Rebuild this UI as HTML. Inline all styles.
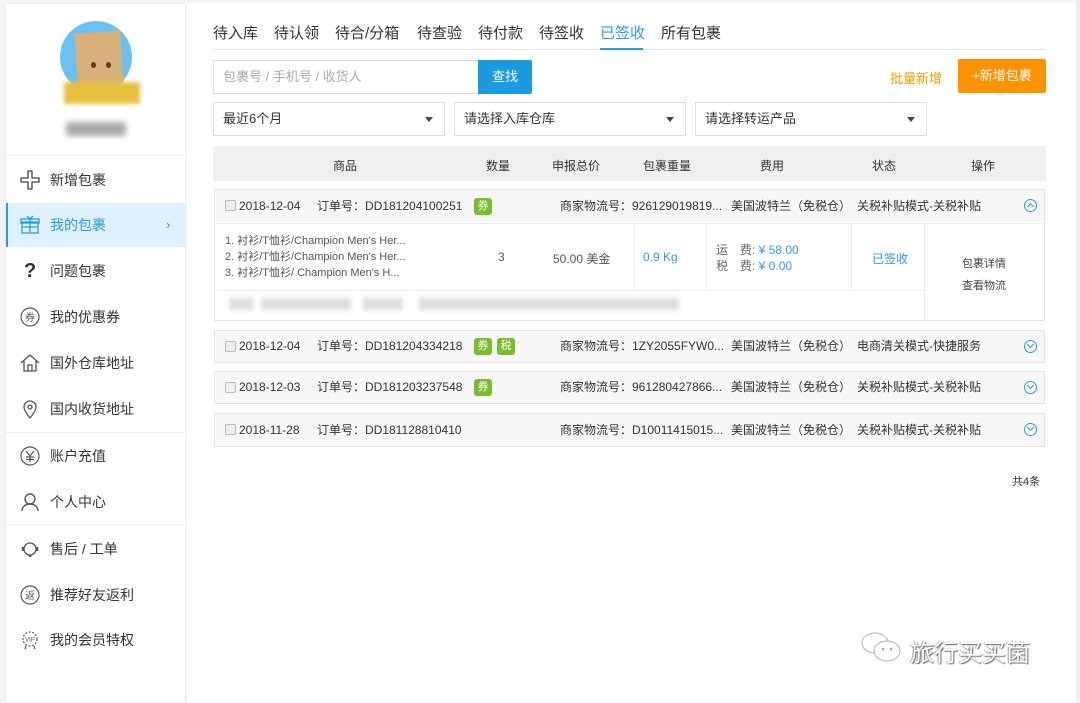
<!DOCTYPE html>
<html><head><meta charset="utf-8"><style>
*{margin:0;padding:0;box-sizing:border-box}
body{width:1080px;height:698px;background:#f4f4f4;font-family:"Liberation Sans","Noto Sans CJK SC",sans-serif;color:#333;position:relative;overflow:hidden;font-size:12px}
.a{position:absolute;white-space:nowrap}
.side{position:absolute;left:5px;top:3px;width:181px;height:700px;background:#fff;border:1px solid #eee}
.main{position:absolute;left:187px;top:3px;width:889px;height:700px;background:#fff}
.mi{position:absolute;left:0;width:179px;height:44px;font-size:14px;color:#333;line-height:44px;padding-left:44px}
.mi svg{position:absolute;left:14px;top:12px}
.div{position:absolute;left:0;width:179px;height:1px;background:#eee}
.tab{position:absolute;top:22px;font-size:15px;color:#333}
.sel{position:absolute;top:102px;height:34px;border:1px solid #ddd;font-size:13px;line-height:32px;padding-left:9px;width:232px}
.sel:after{content:"";position:absolute;right:11px;top:14px;border:4px solid transparent;border-top:5px solid #444}
.card{position:absolute;left:214px;width:831px;border:1px solid #e3e3e3}
.ch{height:32px;background:#f7f7f7;position:relative;font-size:12px;line-height:32px}
.cb{position:absolute;left:10px;top:10px;width:11px;height:11px;border:1px solid #bbb;background:#eee;border-radius:2px}
.tag{position:absolute;top:8px;width:18px;height:17px;background:#7cbb2f;color:#fff;border-radius:3px;font-size:11px;line-height:17px;text-align:center}
.up{position:absolute;left:809px;top:9px;width:13px;height:13px;border:1.3px solid #2a9be0;border-radius:50%}
.up:after{content:"";position:absolute;left:3px;top:4px;width:4px;height:4px;border-left:1.3px solid #2a9be0;border-top:1.3px solid #2a9be0;transform:rotate(45deg)}
.dn:after{top:1px;transform:rotate(225deg)}
.blue{color:#2a9be0}
.blur{position:absolute;height:12px;background:#ddd;filter:blur(2px)}
</style></head><body>
<div class="side">
  <div class="a" style="left:54px;top:17px;width:72px;height:72px;border-radius:50%;background:#6ac0f0"></div>
  <div class="a" style="left:70px;top:28px;width:46px;height:52px;background:#d8b07a;transform:rotate(-4deg)"></div>
  <div class="a" style="left:85px;top:58px;width:5px;height:6px;border-radius:50%;background:#5a3a20"></div>
  <div class="a" style="left:100px;top:58px;width:5px;height:6px;border-radius:50%;background:#5a3a20"></div>
  <div class="a" style="left:58px;top:78px;width:76px;height:22px;background:#e8c040;filter:blur(2px)"></div>
  <div class="a" style="left:60px;top:118px;width:60px;height:14px;background:#aaa;filter:blur(3px)"></div>
  <div class="div" style="top:151px"></div>
  <div class="mi" style="top:154px"><svg width="20" height="20" viewBox="0 0 20 20"><path d="M8 1h4v7h7v4h-7v7H8v-7H1V8h7z" fill="none" stroke="#444" stroke-width="1.3"/></svg>新增包裹</div>
  <div class="mi" style="top:199px;background:#dff1fc;color:#2a9be0;border-left:2px solid #2a9be0;padding-left:42px"><svg width="20" height="20" viewBox="0 0 20 20" style="left:12px"><rect x="2" y="7" width="16" height="11" fill="none" stroke="#2a9be0" stroke-width="1.3"/><rect x="1" y="4" width="18" height="4" fill="none" stroke="#2a9be0" stroke-width="1.3"/><path d="M10 4v14M2 12h16M7 1l3 3 3-3" fill="none" stroke="#2a9be0" stroke-width="1.3"/></svg>我的包裹<span style="position:absolute;left:158px;font-size:13px">›</span></div>
  <div class="mi" style="top:245px"><span style="position:absolute;left:18px;font-size:20px;font-weight:bold;color:#333">?</span>问题包裹</div>
  <div class="mi" style="top:291px"><svg width="20" height="20" viewBox="0 0 20 20"><circle cx="10" cy="10" r="9" fill="none" stroke="#555" stroke-width="1.2"/><text x="10" y="14" font-size="10" text-anchor="middle" fill="#555" font-family="Noto Sans CJK SC">券</text></svg>我的优惠券</div>
  <div class="mi" style="top:337px"><svg width="20" height="20" viewBox="0 0 20 20"><path d="M1 10L10 2l9 8M4 8v10h12V8M8 18v-6h4v6" fill="none" stroke="#555" stroke-width="1.3"/></svg>国外仓库地址</div>
  <div class="mi" style="top:383px"><svg width="20" height="20" viewBox="0 0 20 20"><path d="M10 19s-6-7-6-11a6 6 0 0112 0c0 4-6 11-6 11z" fill="none" stroke="#555" stroke-width="1.3"/><circle cx="10" cy="8" r="2" fill="none" stroke="#555" stroke-width="1.3"/></svg>国内收货地址</div>
  <div class="div" style="top:428px"></div>
  <div class="mi" style="top:430px"><svg width="20" height="20" viewBox="0 0 20 20"><circle cx="10" cy="10" r="9" fill="none" stroke="#555" stroke-width="1.2"/><path d="M6 5l4 5 4-5M10 10v6M6 11h8M6 13.5h8" fill="none" stroke="#555" stroke-width="1.2"/></svg>账户充值</div>
  <div class="mi" style="top:476px"><svg width="20" height="20" viewBox="0 0 20 20"><circle cx="10" cy="7" r="5" fill="none" stroke="#555" stroke-width="1.4"/><path d="M2 19c0-4 3-7 8-7s8 3 8 7" fill="none" stroke="#555" stroke-width="1.4"/></svg>个人中心</div>
  <div class="div" style="top:520px"></div>
  <div class="mi" style="top:523px"><svg width="20" height="20" viewBox="0 0 20 20"><circle cx="10" cy="10" r="6" fill="none" stroke="#555" stroke-width="1.3"/><path d="M3 8v4M17 8v4M10 16v2" stroke="#555" stroke-width="2.5"/></svg>售后 / 工单</div>
  <div class="mi" style="top:569px"><svg width="20" height="20" viewBox="0 0 20 20"><circle cx="10" cy="10" r="9" fill="none" stroke="#555" stroke-width="1.2"/><text x="10" y="14" font-size="10" text-anchor="middle" fill="#555" font-family="Noto Sans CJK SC">返</text></svg>推荐好友返利</div>
  <div class="mi" style="top:614px"><svg width="20" height="20" viewBox="0 0 20 20"><circle cx="10" cy="9" r="7" fill="none" stroke="#555" stroke-width="1.2" stroke-dasharray="2 1.5"/><text x="10" y="11.5" font-size="6" text-anchor="middle" fill="#555">VIP</text><path d="M6 16l-1 3M14 16l1 3" stroke="#555" stroke-width="1.2"/></svg>我的会员特权</div>
</div>
<div class="main"></div>
<div class="a" style="left:1076px;top:0;width:4px;height:698px;background:#eee"></div>

<div class="tab" style="left:213px">待入库</div>
<div class="tab" style="left:274px">待认领</div>
<div class="tab" style="left:335px">待合/分箱</div>
<div class="tab" style="left:417px">待查验</div>
<div class="tab" style="left:478px">待付款</div>
<div class="tab" style="left:539px">待签收</div>
<div class="tab" style="left:600px;color:#2a9be0">已签收</div>
<div class="tab" style="left:661px">所有包裹</div>
<div class="a" style="left:213px;top:49px;width:833px;height:1px;background:#e5e5e5"></div>
<div class="a" style="left:600px;top:48px;width:43px;height:2px;background:#2a9be0"></div>

<div class="a" style="left:213px;top:60px;width:266px;height:34px;border:1px solid #ddd;color:#aaa;font-size:13px;line-height:32px;padding-left:9px">包裹号 / 手机号 / 收货人</div>
<div class="a" style="left:478px;top:60px;width:54px;height:34px;background:#1a9be0;color:#fff;font-size:13px;line-height:34px;text-align:center;border-radius:0 2px 2px 0">查找</div>
<div class="a" style="left:890px;top:68px;color:#f39800;font-size:13px">批量新增</div>
<div class="a" style="left:958px;top:59px;width:88px;height:34px;background:#ff9200;color:#fff;font-size:13px;line-height:34px;text-align:center;border-radius:2px">+新增包裹</div>

<div class="sel" style="left:213px">最近6个月</div>
<div class="sel" style="left:454px">请选择入库仓库</div>
<div class="sel" style="left:695px">请选择转运产品</div>

<div class="a" style="left:213px;top:146px;width:833px;height:35px;background:#efefef"></div>
<div class="a" style="left:333px;top:157px">商品</div>
<div class="a" style="left:486px;top:157px">数量</div>
<div class="a" style="left:552px;top:157px">申报总价</div>
<div class="a" style="left:643px;top:157px">包裹重量</div>
<div class="a" style="left:760px;top:157px">费用</div>
<div class="a" style="left:872px;top:157px">状态</div>
<div class="a" style="left:971px;top:157px">操作</div>

<div class="card" style="top:189px;height:132px">
  <div class="ch"><div class="cb"></div><span class="a" style="left:24px">2018-12-04</span><span class="a" style="left:102px">订单号：DD181204100251</span><div class="tag" style="left:259px">券</div><span class="a" style="left:345px">商家物流号：926129019819...</span><span class="a" style="left:516px">美国波特兰（免税仓）</span><span class="a" style="left:642px">关税补贴模式-关税补贴</span><div class="up"></div></div>
  <div style="position:absolute;top:33px;left:0;width:829px;height:1px;background:#eee"></div>
  <div class="a" style="left:10px;top:43px;line-height:16px;font-size:11px;color:#555">1. 衬衫/T恤衫/Champion Men's Her...<br>2. 衬衫/T恤衫/Champion Men's Her...<br>3. 衬衫/T恤衫/ Champion Men's H...</div>
  <div class="a" style="left:283px;top:60px;color:#555">3</div>
  <div class="a" style="left:338px;top:60px;color:#555">50.00 美金</div>
  <div class="a" style="left:419px;top:34px;width:1px;height:67px;background:#eee"></div>
  <div class="a blue" style="left:428px;top:60px">0.9 Kg</div>
  <div class="a" style="left:491px;top:34px;width:1px;height:67px;background:#eee"></div>
  <div class="a" style="left:501px;top:52px;line-height:16px;color:#666">运　费: <span class="blue">¥ 58.00</span><br>税　费: <span class="blue">¥ 0.00</span></div>
  <div class="a" style="left:636px;top:34px;width:1px;height:67px;background:#eee"></div>
  <div class="a blue" style="left:657px;top:60px">已签收</div>
  <div class="a" style="left:709px;top:34px;width:1px;height:97px;background:#eee"></div>
  <div class="a" style="left:747px;top:63px;line-height:22px;color:#444;font-size:11px">包裹详情<br>查看物流</div>
  <div class="a" style="left:0;top:100px;width:709px;height:1px;background:#eee"></div>
  <div class="blur" style="left:14px;top:108px;width:24px"></div>
  <div class="blur" style="left:46px;top:108px;width:90px"></div>
  <div class="blur" style="left:148px;top:108px;width:40px"></div>
  <div class="blur" style="left:204px;top:108px;width:260px"></div>
</div>

<div class="card" style="top:330px;height:33px">
  <div class="ch" style="height:31px;line-height:31px"><div class="cb"></div><span class="a" style="left:24px">2018-12-04</span><span class="a" style="left:102px">订单号：DD181204334218</span><div class="tag" style="left:259px;top:7px">券</div><div class="tag" style="left:282px;top:7px">税</div><span class="a" style="left:345px">商家物流号：1ZY2055FYW0...</span><span class="a" style="left:516px">美国波特兰（免税仓）</span><span class="a" style="left:642px">电商清关模式-快捷服务</span><div class="up dn"></div></div>
</div>
<div class="card" style="top:371px;height:33px">
  <div class="ch" style="height:31px;line-height:31px"><div class="cb"></div><span class="a" style="left:24px">2018-12-03</span><span class="a" style="left:102px">订单号：DD181203237548</span><div class="tag" style="left:259px;top:7px">券</div><span class="a" style="left:345px">商家物流号：961280427866...</span><span class="a" style="left:516px">美国波特兰（免税仓）</span><span class="a" style="left:642px">关税补贴模式-关税补贴</span><div class="up dn"></div></div>
</div>
<div class="card" style="top:413px;height:34px">
  <div class="ch" style="line-height:32px"><div class="cb"></div><span class="a" style="left:24px">2018-11-28</span><span class="a" style="left:102px">订单号：DD181128810410</span><span class="a" style="left:345px">商家物流号：D10011415015...</span><span class="a" style="left:516px">美国波特兰（免税仓）</span><span class="a" style="left:642px">关税补贴模式-关税补贴</span><div class="up dn"></div></div>
</div>

<div class="a" style="left:1012px;top:473px;font-size:11px;color:#333">共4条</div>

<svg class="a" style="left:860px;top:630px" width="44" height="36" viewBox="0 0 44 36"><ellipse cx="15" cy="13" rx="13" ry="10" fill="#fff" stroke="#bbb" stroke-width="1.2"/><ellipse cx="27" cy="21" rx="13" ry="10" fill="#fff" stroke="#bbb" stroke-width="1.2"/><circle cx="23" cy="19" r="1.3" fill="#aaa"/><circle cx="31" cy="19" r="1.3" fill="#aaa"/></svg>
<div class="a" style="left:910px;top:633px;font-size:24px;color:#fff;text-shadow:1px 1px 1px #666,-1px 0 1px #999">旅行买买菌</div>
</body></html>
